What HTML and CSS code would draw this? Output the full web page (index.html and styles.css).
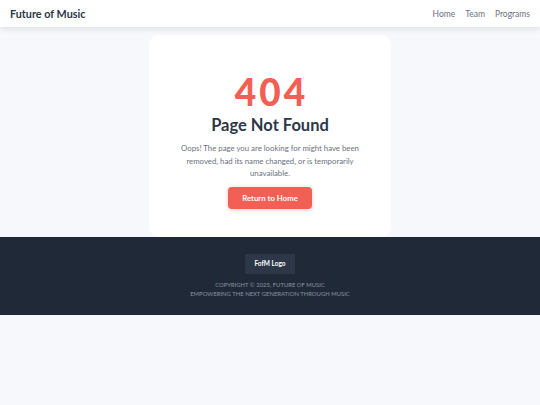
FILE: index.html
```html
<!DOCTYPE html>
<html lang="en">
<head>
  <meta charset="UTF-8" />
  <meta name="viewport" content="width=device-width, initial-scale=1" />
  <title>Page Not Found - Future of Music</title>
  <link rel="stylesheet" href="styles.css">
</head>
<body>
  <header class="site-header">
    <a class="brand" href="#">Future of Music</a>
    <nav class="nav">
      <a href="#">Home</a>
      <a href="#">Team</a>
      <a href="#">Programs</a>
    </nav>
  </header>

  <main class="main">
    <div class="card">
      <h1 class="code">404</h1>
      <h2 class="title">Page Not Found</h2>
      <p class="message">Oops! The page you are looking for might have been removed, had its name changed, or is temporarily unavailable.</p>
      <a class="btn" href="#">Return to Home</a>
    </div>
  </main>

  <footer class="site-footer">
    <div class="footer-logo">FofM Logo</div>
    <p class="copy">Copyright &copy; 2025, Future of Music<br>Empowering the next generation through music</p>
  </footer>
</body>
</html>
```

FILE: styles.css
```css
body {
  margin: 0;
  font-family: Lato, "Open Sans", sans-serif;
  background-color: #f7f8fc;
  color: #2d3748;
}

a {
  text-decoration: none;
}

.site-header {
  height: 27px;
  padding: 0 10px;
  display: flex;
  align-items: center;
  justify-content: space-between;
  background: #fff;
  box-shadow: 0 2px 6px rgba(0, 0, 0, 0.1);
  position: relative;
  z-index: 1;
}

.brand {
  font-size: 10.8px;
  font-weight: 700;
  color: #2d3748;
}

.nav {
  display: flex;
  gap: 10px;
}

.nav a {
  font-size: 8.5px;
  color: #6b7280;
}

.main {
  display: flex;
  justify-content: center;
  padding-top: 8px;
}

.card {
  width: 242px;
  box-sizing: border-box;
  padding: 41px 20px 28px;
  background: #fff;
  border-radius: 10px;
  text-align: center;
}

.code {
  margin: 0;
  font-size: 37px;
  line-height: 32px;
  font-weight: 900;
  color: #f25f55;
  letter-spacing: 3px;
  padding-left: 3px;
}

.title {
  margin: 7px 0 0;
  font-size: 16.5px;
  line-height: 20px;
  font-weight: 700;
  color: #2d3748;
}

.message {
  margin: 7px 0 0;
  font-size: 7.8px;
  line-height: 12.5px;
  color: #6b7280;
}

.btn {
  display: inline-block;
  margin-top: 7px;
  width: 84px;
  height: 22px;
  line-height: 22px;
  border-radius: 4px;
  background: #f25f55;
  color: #fff;
  font-size: 7.8px;
  font-weight: 700;
  box-shadow: 0 1px 4px rgba(242, 95, 85, 0.35);
}

.site-footer {
  background: #1f2937;
  padding: 17px 0 17px;
  display: flex;
  flex-direction: column;
  align-items: center;
}

.footer-logo {
  width: 50px;
  height: 20px;
  line-height: 20px;
  text-align: center;
  background: #2d3748;
  color: #fff;
  font-size: 6.5px;
  font-weight: 700;
}

.copy {
  margin: 6px 0 0;
  font-size: 5.9px;
  line-height: 9px;
  text-align: center;
  text-transform: uppercase;
  color: #8b95a5;
}
```
